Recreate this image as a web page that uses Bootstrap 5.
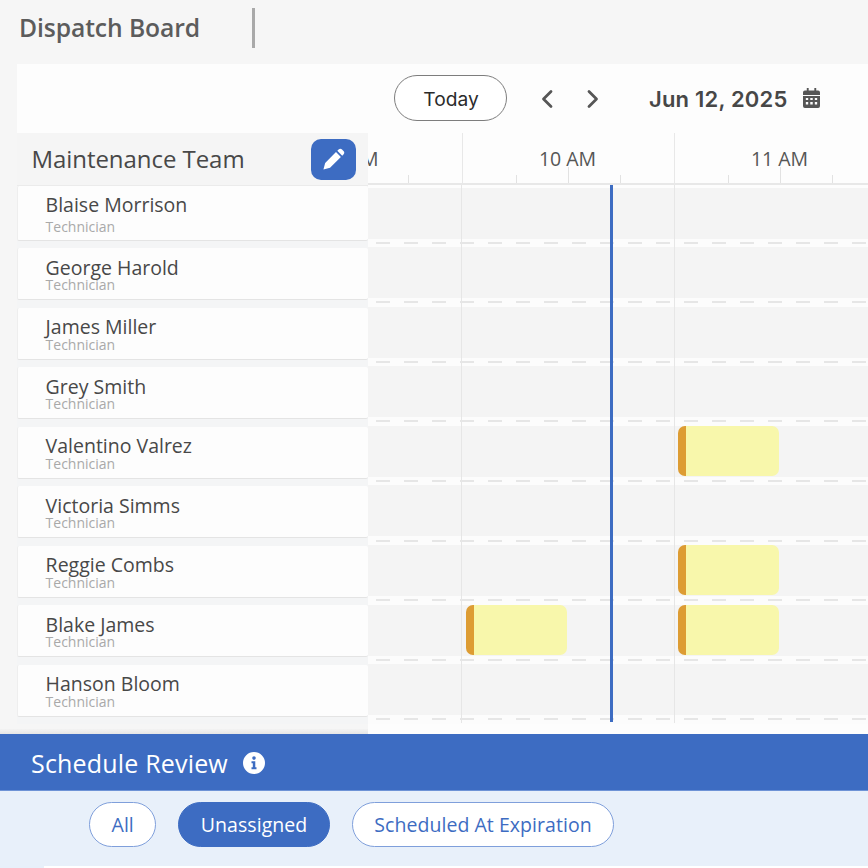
<!DOCTYPE html>
<html lang="en">
<head>
<meta charset="utf-8">
<title>Dispatch Board</title>
<link href="https://cdn.jsdelivr.net/npm/bootstrap@5.3.0/dist/css/bootstrap.min.css" rel="stylesheet">
<style>
:root { --brand: #3d6cc2; }
html, body { height: 868px; overflow: hidden; }
body { background: #f6f6f6; font-family: "Open Sans", sans-serif; color: #4a4a4a; }
.top-bar { height: 64px; padding-left: 19px; }
.page-title { font-size: 24.7px; font-weight: 600; color: #5c5c5c; margin: 0; width: 233px; line-height: 1; letter-spacing: -.1px; padding-bottom: 8px; }
.title-rule { width: 3px; height: 40px; background: #a9a9a9; margin-bottom: 8px; }
.tool-bar { height: 69px; margin-left: 17px; padding-left: 377px; background: #fdfdfd; font-family: Inter, sans-serif; }
.today-btn { width: 113px; height: 46px; padding: 2px 0 0 1px; font-size: 19.2px; color: #2b2b2b; border: 1px solid #7d7d7d; background: #fff; margin-bottom: 1px; }
.nav-chev { width: 46px; margin: 0; padding: 0; border: 0; background: none; line-height: 0; }
.nav-first { margin-left: 17px; }
.date-label { font-size: 22px; font-weight: 600; color: #474747; margin-left: 33px; margin-right: 15px; letter-spacing: .2px; padding-top: 1px; }
.cal-icon { margin-bottom: 2px; }
.board { height: 601px; position: relative; }
.left-col { width: 351px; margin-left: 17px; flex: none; }
.team-head { height: 53px; padding: 1px 12px 0 15px; background: #f5f5f5; border-bottom: 1px solid #ebebeb; }
.team-title { font-size: 24px; margin: 0 0 0 -.6px; color: #484848; letter-spacing: -.05px; }
.edit-btn { width: 45px; height: 41px; padding: 0; background: var(--brand); border: 0; border-radius: 10px; }
.person-slot { height: 59.5px; background: #f4f5f6; }
.slot-first { height: 62px; }
.person-cell { height: 52px; padding: 9.5px 0 0 27.6px; background: #fdfdfd; border-left: 1px solid #eeeeee; border-bottom: 1px solid #e4e4e4; border-radius: 2px; }
.slot-first .person-cell { height: 55px; padding-top: 9px; }
.person-name { font-size: 19.5px; line-height: 20px; color: #484848; }
.person-role { font-size: 14px; line-height: 14px; color: #a9a9a9; padding-top: .5px; }
.slot-first .person-role { margin-top: 4px; }
.time-col { background: #fdfdfd; overflow: hidden; position: relative; }
.ruler { height: 52px; margin-left: -118px; border-bottom: 2px solid #e8e8e8; }
.hour-cell { flex: 0 0 212px; border-left: 1px solid #e8e8e8; text-align: center; font-size: 19.5px; color: #565656; padding: 13px 2px 0 0; line-height: 26px;
  background-image: linear-gradient(#e2e2e2,#e2e2e2), linear-gradient(#e2e2e2,#e2e2e2), linear-gradient(#e2e2e2,#e2e2e2);
  background-repeat: no-repeat; background-size: 1px 8px, 1px 16px, 1px 8px; background-position: 53px bottom, 105px bottom, 157px bottom; }
.lane { height: 59.6px; }
.lane-first { height: 62px; padding-top: 3px; }
.lane-band { height: 51px; background: #f4f4f4; position: relative; }
.lane-strip { height: 8.6px; background: #fcfcfc repeating-linear-gradient(90deg, #e6e6e6 0 14px, transparent 14px 28px) 8px center / 100% 2px no-repeat; }
.shift { position: absolute; top: 0; width: 101px; height: 50px; background: #f8f7ab; border-left: 8px solid #dd9c33; border-radius: 7px; }
.shift-early { left: 98px; }
.shift-late { left: 310px; }
.grid-line { position: absolute; top: 52px; width: 1px; height: 538px; background: #e6e6e6; }
.grid-a { left: 93px; }
.grid-b { left: 306px; }
.now-line { position: absolute; top: 52px; left: 242px; width: 3px; height: 537px; background: var(--brand); }
.left-fade { position: absolute; left: 0; bottom: 0; width: 368px; height: 5px; background: linear-gradient(#f3f3f3,#e6e6e6); }
.review-head { height: 57px; padding: 2px 0 0 31px; background: var(--brand); color: #fff; border-bottom: 1px solid #6e93d6; }
.review-title { font-size: 25px; font-weight: 400; margin: 0 15px 0 0; letter-spacing: .18px; }
.review-body { height: 77px; background: #e8f0fa; padding: 11px 0 0 89px; position: relative; gap: 22px; }
.review-sheet { position: absolute; left: 44px; right: 0; bottom: 0; height: 2px; background: #fff; }
.pill-btn { height: 45px; padding: 0 21.5px; font-size: 19.5px; line-height: 1; letter-spacing: .05px; color: var(--brand); background: #fff; border: 1px solid #7f9fdb; }
.pill-on { background: var(--brand); color: #fff; border-color: var(--brand); }
</style>
</head>
<body>
<header class="top-bar d-flex align-items-center">
  <h1 class="page-title">Dispatch Board</h1>
  <div class="title-rule"></div>
</header>

<div class="tool-bar d-flex align-items-center">
  <button class="btn rounded-pill today-btn" type="button">Today</button>
  <button class="nav-chev nav-first" type="button" aria-label="Previous">
    <svg width="14" height="20" viewBox="0 0 14 20"><path d="M11 2.500 3.500 10 11 17.500" fill="none" stroke="#565656" stroke-width="2.800" stroke-linecap="round" stroke-linejoin="round"/></svg>
  </button>
  <button class="nav-chev" type="button" aria-label="Next">
    <svg width="14" height="20" viewBox="0 0 14 20"><path d="M3 2.500 10.500 10 3 17.500" fill="none" stroke="#565656" stroke-width="2.800" stroke-linecap="round" stroke-linejoin="round"/></svg>
  </button>
  <span class="date-label">Jun 12, 2025</span>
  <svg class="cal-icon" width="17" height="20" viewBox="0 0 18 20" preserveAspectRatio="none" aria-hidden="true">
    <path fill="#565656" d="M4 0h2v2.500h6V0h2v2.500h2a2 2 0 0 1 2 2V7H0V4.500a2 2 0 0 1 2-2h2z"/>
    <path fill="#565656" fill-rule="evenodd" d="M0 8h18v10a2 2 0 0 1-2 2H2a2 2 0 0 1-2-2zM3 10v2h2.500v-2zM7.700 10v2h2.600v-2zM12.500 10v2H15v-2zM3 14v2.500h2.500V14zM7.700 14v2.500h2.600V14zM12.500 14v2.500H15V14z"/>
  </svg>
</div>

<main class="board d-flex">
  <section class="left-col">
    <div class="team-head d-flex align-items-center justify-content-between">
      <h2 class="team-title fw-normal">Maintenance Team</h2>
      <button class="edit-btn d-flex align-items-center justify-content-center" type="button" aria-label="Edit">
        <svg width="23" height="23" viewBox="0 0 24 24"><path fill="#fff" d="M1.500 22.500 3.300 15.600 14.600 4.300 19.700 9.400 8.400 20.700zM16 2.900l1.300-1.300a2.600 2.600 0 0 1 3.600 0l1.500 1.500a2.600 2.600 0 0 1 0 3.600L21.100 8z"/></svg>
      </button>
    </div>
    <div class="person-slot slot-first"><div class="person-cell"><div class="person-name">Blaise Morrison</div><div class="person-role">Technician</div></div></div>
    <div class="person-slot"><div class="person-cell"><div class="person-name">George Harold</div><div class="person-role">Technician</div></div></div>
    <div class="person-slot"><div class="person-cell"><div class="person-name">James Miller</div><div class="person-role">Technician</div></div></div>
    <div class="person-slot"><div class="person-cell"><div class="person-name">Grey Smith</div><div class="person-role">Technician</div></div></div>
    <div class="person-slot"><div class="person-cell"><div class="person-name">Valentino Valrez</div><div class="person-role">Technician</div></div></div>
    <div class="person-slot"><div class="person-cell"><div class="person-name">Victoria Simms</div><div class="person-role">Technician</div></div></div>
    <div class="person-slot"><div class="person-cell"><div class="person-name">Reggie Combs</div><div class="person-role">Technician</div></div></div>
    <div class="person-slot"><div class="person-cell"><div class="person-name">Blake James</div><div class="person-role">Technician</div></div></div>
    <div class="person-slot"><div class="person-cell"><div class="person-name">Hanson Bloom</div><div class="person-role">Technician</div></div></div>
  </section>

  <section class="time-col flex-grow-1">
    <div class="ruler d-flex">
      <div class="hour-cell">9 AM</div>
      <div class="hour-cell">10 AM</div>
      <div class="hour-cell">11 AM</div>
    </div>
    <div class="lane lane-first"><div class="lane-band"></div><div class="lane-strip"></div></div>
    <div class="lane"><div class="lane-band"></div><div class="lane-strip"></div></div>
    <div class="lane"><div class="lane-band"></div><div class="lane-strip"></div></div>
    <div class="lane"><div class="lane-band"></div><div class="lane-strip"></div></div>
    <div class="lane"><div class="lane-band"><div class="shift shift-late"></div></div><div class="lane-strip"></div></div>
    <div class="lane"><div class="lane-band"></div><div class="lane-strip"></div></div>
    <div class="lane"><div class="lane-band"><div class="shift shift-late"></div></div><div class="lane-strip"></div></div>
    <div class="lane"><div class="lane-band"><div class="shift shift-early"></div><div class="shift shift-late"></div></div><div class="lane-strip"></div></div>
    <div class="lane"><div class="lane-band"></div><div class="lane-strip"></div></div>
    <div class="grid-line grid-a"></div>
    <div class="grid-line grid-b"></div>
    <div class="now-line"></div>
  </section>
  <div class="left-fade"></div>
</main>

<section>
  <div class="review-head d-flex align-items-center">
    <h2 class="review-title">Schedule Review</h2>
    <svg width="22" height="22" viewBox="0 0 22 22" aria-hidden="true">
      <path fill="#fff" fill-rule="evenodd" d="M11 0a11 11 0 1 1 0 22a11 11 0 0 1 0-22zM11 4.300a1.800 1.800 0 1 0 0 3.600a1.800 1.800 0 0 0 0-3.600zM8.500 9.300v1.900h1.300v4H8.500v2h5v-2h-1.200V9.300z"/>
    </svg>
  </div>
  <div class="review-body d-flex align-items-start">
    <button class="btn rounded-pill pill-btn" type="button">All</button>
    <button class="btn rounded-pill pill-btn pill-on" type="button">Unassigned</button>
    <button class="btn rounded-pill pill-btn" type="button">Scheduled At Expiration</button>
    <div class="review-sheet"></div>
  </div>
</section>
<script src="https://cdn.jsdelivr.net/npm/bootstrap@5.3.0/dist/js/bootstrap.bundle.min.js"></script>
</body>
</html>
